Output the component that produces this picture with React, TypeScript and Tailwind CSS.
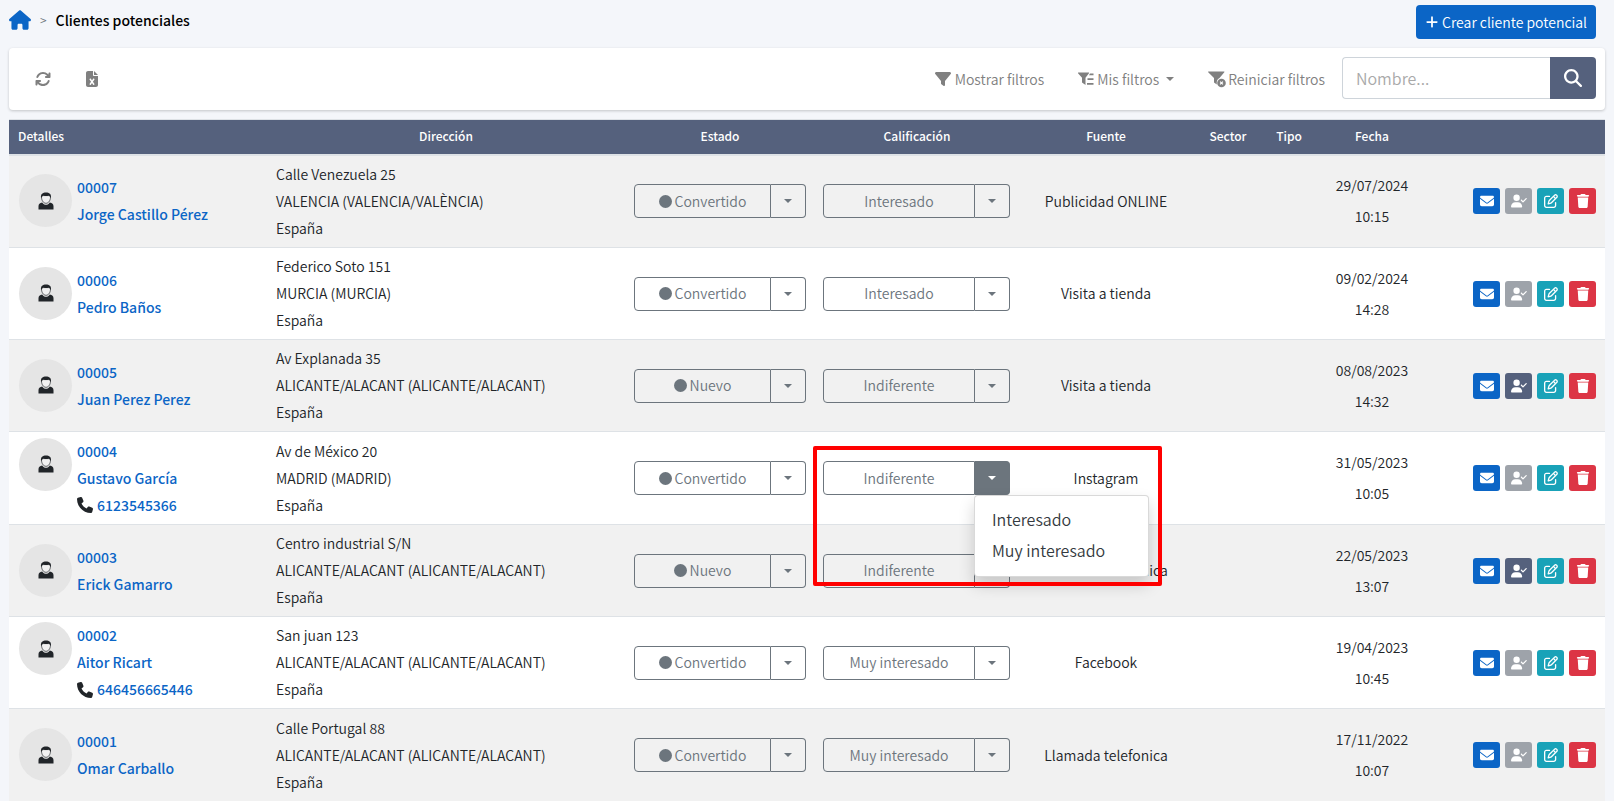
import { FaHouse, FaPlus, FaArrowsRotate, FaFileExcel, FaFilter, FaMagnifyingGlass, FaPhone, FaEnvelope, FaUserCheck, FaRegPenToSquare, FaTrash, FaCircle } from 'react-icons/fa6'

type Lead = {
    id: string
    name: string
    phone?: string
    address: string[]
    status: string
    rating: string
    source: string
    date: string
    time: string
    open?: boolean
}

const ALC = 'ALICANTE/ALACANT (ALICANTE/ALACANT)'

const leads: Lead[] = [
    { id: '00007', name: 'Jorge Castillo Pérez', address: ['Calle Venezuela 25', 'VALENCIA (VALENCIA/VALÈNCIA)', 'España'], status: 'Convertido', rating: 'Interesado', source: 'Publicidad ONLINE', date: '29/07/2024', time: '10:15' },
    { id: '00006', name: 'Pedro Baños', address: ['Federico Soto 151', 'MURCIA (MURCIA)', 'España'], status: 'Convertido', rating: 'Interesado', source: 'Visita a tienda', date: '09/02/2024', time: '14:28' },
    { id: '00005', name: 'Juan Perez Perez', address: ['Av Explanada 35', ALC, 'España'], status: 'Nuevo', rating: 'Indiferente', source: 'Visita a tienda', date: '08/08/2023', time: '14:32' },
    { id: '00004', name: 'Gustavo García', phone: '6123545366', address: ['Av de México 20', 'MADRID (MADRID)', 'España'], status: 'Convertido', rating: 'Indiferente', source: 'Instagram', date: '31/05/2023', time: '10:05', open: true },
    { id: '00003', name: 'Erick Gamarro', address: ['Centro industrial S/N', ALC, 'España'], status: 'Nuevo', rating: 'Indiferente', source: 'Llamada telefonica', date: '22/05/2023', time: '13:07' },
    { id: '00002', name: 'Aitor Ricart', phone: '646456665446', address: ['San juan 123', ALC, 'España'], status: 'Convertido', rating: 'Muy interesado', source: 'Facebook', date: '19/04/2023', time: '10:45' },
    { id: '00001', name: 'Omar Carballo', address: ['Calle Portugal 88', ALC, 'España'], status: 'Convertido', rating: 'Muy interesado', source: 'Llamada telefonica', date: '17/11/2022', time: '10:07' },
]

function Caret() {
    return (
        <svg width="8" height="4" viewBox="0 0 8 4" fill="currentColor" aria-hidden="true">
            <path d="M0 0h8L4 4z" />
        </svg>
    )
}

function PersonIcon() {
    return (
        <svg width="16" height="18" viewBox="0 0 16 18" aria-hidden="true">
            <path d="M3.5 5c0 3.400 2 6.300 4.500 6.300s4.500-2.900 4.500-6.300" fill="#f1f1f1" stroke="#212529" strokeWidth="0.7" />
            <path d="M3 5.400C2.600 2 4.800.5 8 .5s5.400 1.500 5 4.900l-.9-.2c-.3-.9-.9-1.300-1.600-1.400-1.600.4-3.600.3-5-.1-.7.2-1.400.8-1.600 1.500z" fill="#212529" />
            <path d="M.5 17.500v-3.300c0-2 1.300-3.200 3.700-3.700 1 1.500 2.300 2.300 3.800 2.300s2.800-.8 3.800-2.300c2.400.5 3.700 1.700 3.700 3.700v3.300z" fill="#212529" />
        </svg>
    )
}

function FilterListIcon() {
    return (
        <svg width="16" height="14" viewBox="0 0 16 14" fill="currentColor" aria-hidden="true">
            <path d="M.3.500h10.400c.4 0 .5.400.3.700L7.500 5.800V13L4 10.500V5.800L0 1.200C-.2.900 0 .5.300.5z" />
            <path d="M12 1.500h3.500v1.700H11zM9.500 6.200h6v1.700h-6zM9 11h6.500v1.700H9z" />
        </svg>
    )
}

function FilterResetIcon() {
    return (
        <svg width="18" height="17" viewBox="0 0 18 17" aria-hidden="true">
            <path d="M.5.5h15.500c.4 0 .6.500.3.800L11.500 7C9.500 8 8.500 9.500 8.800 13.500L6 11.500V7L.2 1.300C0 1 .1.500.5.500z" fill="currentColor" />
            <circle cx="13.500" cy="12" r="4.300" fill="currentColor" />
            <path d="M12.100 10.600l2.800 2.800M14.900 10.600l-2.800 2.800" stroke="#fff" strokeWidth="1.200" />
        </svg>
    )
}

function SplitButton({ label, dot, open }: { label: string, dot?: boolean, open?: boolean }) {
    return (
        <div className="relative flex h-[34px] text-[#6c757d]">
            <button className="flex grow items-center justify-center gap-[3px] rounded-l border border-[#6c757d]">
                {dot && <FaCircle className="size-[13px]" />}
                {label}
            </button>
            <button
                aria-label={`Cambiar ${label}`}
                className={`flex w-[35px] items-center justify-center rounded-r border border-l-0 border-[#6c757d] ${open ? 'bg-[#6c757d] text-white' : ''}`}
            >
                <Caret />
            </button>
            {open && (
                <>
                    <div className="absolute -left-[10px] -top-[15px] z-20 h-[140px] w-[349px] rounded-xs border-4 border-[#ff0000] pointer-events-none" />
                    <ul className="absolute left-[151px] top-[34px] z-10 w-[175px] rounded border border-black/15 bg-white pb-2.5 pt-2 text-base leading-[31px] text-[#343a40] shadow-[0_8px_16px_rgba(0,0,0,0.175)]">
                        <li><button className="w-full px-[17px] text-left">Interesado</button></li>
                        <li><button className="w-full px-[17px] text-left">Muy interesado</button></li>
                    </ul>
                </>
            )}
        </div>
    )
}

function LeadRow({ lead }: { lead: Lead }) {
    const action = 'flex h-[26px] w-[27px] items-center justify-center rounded-[3px] text-white'
    const link = 'font-medium text-[#0b65c6]'
    return (
        <tr className="h-[92px] border-t border-[#dee2e6] odd:bg-[#f1f1f1] nth-[3n+1]:h-[93px]">
            <td className="px-[10px]">
                <div className="flex gap-[5px]">
                    <div className="flex size-[53px] items-center justify-center rounded-full bg-[#e5e5e5]">
                        <PersonIcon />
                    </div>
                    <div className="leading-[27px]">
                        <a href="#" className={`block ${link}`}>{lead.id}</a>
                        <a href="#" className={`block ${link}`}>{lead.name}</a>
                        {lead.phone && (
                            <div className="flex items-center gap-1">
                                <FaPhone className="size-4" />
                                <a href="#" className={link}>{lead.phone}</a>
                            </div>
                        )}
                    </div>
                </div>
            </td>
            <td className="px-[9px] leading-[27px]">
                {lead.address.map((line) => <div key={line}>{line}</div>)}
            </td>
            <td className="px-[9px]"><SplitButton label={lead.status} dot /></td>
            <td className="pl-2 pr-[9px]"><SplitButton label={lead.rating} open={lead.open} /></td>
            <td className="text-center">{lead.source}</td>
            <td></td>
            <td></td>
            <td className="text-center leading-[31px]">
                <div>{lead.date}</div>
                <div>{lead.time}</div>
            </td>
            <td className="px-[9px]">
                <div className="flex justify-end gap-[5px]">
                    <button aria-label="Enviar correo" className={`${action} bg-[#0b65c6]`}><FaEnvelope className="size-[14px]" /></button>
                    <button aria-label="Convertir" className={`${action} ${lead.status === 'Nuevo' ? 'bg-[#55617d]' : 'bg-[#9ea3aa]'}`}><FaUserCheck className="h-[14px] w-4" /></button>
                    <button aria-label="Editar" className={`${action} bg-[#19a2b8]`}><FaRegPenToSquare className="size-[14px]" /></button>
                    <button aria-label="Eliminar" className={`${action} bg-[#dc3545]`}><FaTrash className="size-[14px]" /></button>
                </div>
            </td>
        </tr>
    )
}

function App() {
    return (
        <div className="min-h-screen overflow-x-hidden bg-[#f4f6fa] px-[9px] font-['Noto_Sans_CJK_JP',sans-serif] text-[14px] font-[350] text-[#212529]">
            <header className="flex h-12 items-start justify-between pr-[9px] pt-[5px]">
                <nav className="flex h-[30px] items-center gap-[9px]">
                    <a href="#" aria-label="Inicio"><FaHouse className="h-5 w-[22px] text-[#0b65c6]" /></a>
                    <span className="text-xs text-[#6c757d]">&gt;</span>
                    <span className="font-medium text-black">Clientes potenciales</span>
                </nav>
                <button className="flex h-[34px] items-center gap-[3px] rounded bg-[#0b65c6] px-[9px] text-white">
                    <FaPlus className="size-[14px]" />
                    Crear cliente potencial
                </button>
            </header>

            <div className="flex h-[62px] items-center justify-between rounded bg-white pl-[26px] pr-[9px] text-[#808080] shadow-[0_1px_3px_rgba(0,0,0,0.2)]">
                <div className="flex gap-[33px]">
                    <button aria-label="Actualizar"><FaArrowsRotate className="size-4" /></button>
                    <button aria-label="Exportar a Excel"><FaFileExcel className="size-4" /></button>
                </div>
                <div className="flex items-center">
                    <button className="mr-[34px] flex items-center gap-1"><FaFilter className="size-4" />Mostrar filtros</button>
                    <button className="mr-[34px] flex items-center gap-[3px]"><FilterListIcon />Mis filtros<span className="ml-1"><Caret /></span></button>
                    <button className="mr-[17px] flex items-center gap-0.5"><FilterResetIcon />Reiniciar filtros</button>
                    <form className="mb-0.5 flex h-[42px]">
                        <input aria-label="Nombre" placeholder="Nombre..." className="w-[208px] rounded-l border border-r-0 border-[#ced4da] bg-white px-[13px] text-base placeholder:text-[#a9a9a9]" />
                        <button type="button" aria-label="Buscar" className="flex w-[46px] items-center justify-center rounded-r bg-[#55617d] text-white"><FaMagnifyingGlass className="size-[18px]" /></button>
                    </form>
                </div>
            </div>

            <table className="mt-[9px] w-full table-fixed border-collapse bg-white">
                <colgroup>
                    <col className="w-[258px]" />
                    <col />
                    <col className="w-[190px]" />
                    <col className="w-[204px]" />
                    <col className="w-[174px]" />
                    <col className="w-[70px]" />
                    <col className="w-[52px]" />
                    <col className="w-[114px]" />
                    <col className="w-[176px]" />
                </colgroup>
                <thead>
                    <tr className="h-[35px] border-b-2 border-t border-[#dee2e6] bg-[#55617d] text-xs text-white *:pb-0.5 *:font-medium">
                        <th className="px-[9px] text-left">Detalles</th>
                        <th>Dirección</th>
                        <th>Estado</th>
                        <th>Calificación</th>
                        <th>Fuente</th>
                        <th>Sector</th>
                        <th>Tipo</th>
                        <th>Fecha</th>
                        <th></th>
                    </tr>
                </thead>
                <tbody>
                    {leads.map((lead) => <LeadRow key={lead.id} lead={lead} />)}
                </tbody>
            </table>
        </div>
    )
}

export default App
